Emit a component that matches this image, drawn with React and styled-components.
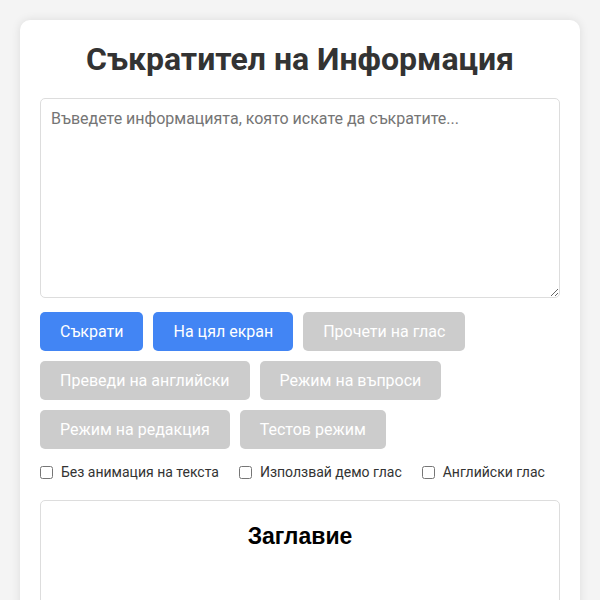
import React from 'react';
import styled, { createGlobalStyle } from 'styled-components';

const GlobalStyle = createGlobalStyle`
  body {
    margin: 0;
    background: #f4f4f4;
    font-family: Roboto, "Liberation Sans", sans-serif;
  }
`;

const Page = styled.div`
  padding: 20px;
`;

const Card = styled.div`
  background: #fff;
  border-radius: 10px;
  box-shadow: 0 0 10px rgba(0, 0, 0, 0.1);
  padding: 20px;
`;

const Title = styled.h1`
  margin: 0 0 20px;
  text-align: center;
  font-size: 32px;
  line-height: 38px;
  font-weight: 700;
  color: #333;
`;

const Input = styled.textarea`
  display: block;
  box-sizing: border-box;
  width: 100%;
  height: 200px;
  padding: 10px;
  border: 1px solid #ddd;
  border-radius: 5px;
  font-family: Roboto, sans-serif;
  font-size: 16px;
  line-height: 20px;
  resize: vertical;
  &::placeholder {
    color: #757575;
  }
`;

const Buttons = styled.div`
  display: flex;
  flex-wrap: wrap;
  gap: 10px;
  margin-top: 14px;
`;

const Button = styled.button`
  height: 39px;
  padding: 0 20px;
  border: none;
  border-radius: 5px;
  font-family: Roboto, sans-serif;
  font-size: 16px;
  color: #fff;
  background: ${p => (p.disabled ? '#cccccc' : '#4285f4')};
  cursor: ${p => (p.disabled ? 'default' : 'pointer')};
`;

const Options = styled.div`
  display: flex;
  gap: 20px;
  margin-top: 15px;
  font-size: 14px;
  color: #333;
`;

const Option = styled.label`
  display: flex;
  align-items: center;
  gap: 8px;
  input {
    margin: 0;
    width: 13px;
    height: 13px;
  }
`;

const Result = styled.div`
  margin-top: 20px;
  border: 1px solid #ddd;
  border-radius: 5px;
  padding: 20px;
  min-height: 200px;
`;

const ResultTitle = styled.h2`
  margin: 0;
  text-align: center;
  font-family: "Liberation Sans", Arial, sans-serif;
  font-size: 23px;
  line-height: 30px;
  font-weight: 700;
  color: #000;
`;

const App = () => {
  return (
    <Page>
      <GlobalStyle />
      <Card>
        <Title>Съкратител на Информация</Title>
        <Input placeholder="Въведете информацията, която искате да съкратите..." />
        <Buttons>
          <Button>Съкрати</Button>
          <Button>На цял екран</Button>
          <Button disabled>Прочети на глас</Button>
          <Button disabled>Преведи на английски</Button>
          <Button disabled>Режим на въпроси</Button>
          <Button disabled>Режим на редакция</Button>
          <Button disabled>Тестов режим</Button>
        </Buttons>
        <Options>
          <Option><input type="checkbox" />Без анимация на текста</Option>
          <Option><input type="checkbox" />Използвай демо глас</Option>
          <Option><input type="checkbox" />Английски глас</Option>
        </Options>
        <Result>
          <ResultTitle>Заглавие</ResultTitle>
        </Result>
      </Card>
    </Page>
  );
};

export default App;
